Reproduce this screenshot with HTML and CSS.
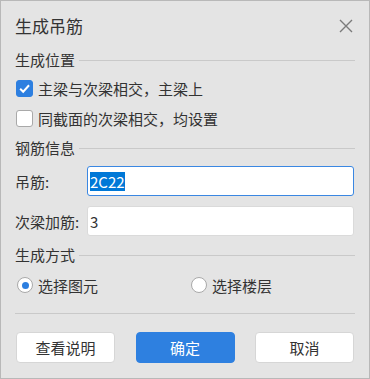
FILE: index.html
```html
<!DOCTYPE html>
<html lang="zh-cn">

<head>
    <meta charset="UTF-8">
    <meta name="viewport" content="width=device-width, initial-scale=1.0">
    <title>生成吊筋</title>
    <link rel="stylesheet" href="styles.css">
</head>

<body>
    <div class="dialog">
        <div class="title-bar">
            <span class="title">生成吊筋</span>
            <svg class="close" width="14" height="14" viewBox="0 0 14 14">
                <path d="M1 1L13 13M13 1L1 13" stroke="#7a7a7a" stroke-width="1.4" fill="none" />
            </svg>
        </div>

        <div class="group-title">生成位置<span class="rule"></span></div>
        <div class="check-row">
            <span class="check checked">
                <svg width="13" height="13" viewBox="0 0 12 12">
                    <path d="M2 6.2L4.8 9L10.2 3" stroke="#fff" stroke-width="1.8" fill="none" />
                </svg>
            </span>
            主梁与次梁相交，主梁上
        </div>
        <div class="check-row">
            <span class="check"></span>
            同截面的次梁相交，均设置
        </div>

        <div class="group-title group-2">钢筋信息<span class="rule"></span></div>
        <div class="field-row">
            <span class="label">吊筋:</span>
            <div class="input focused"><span class="selected">2C22</span></div>
        </div>
        <div class="field-row field-2">
            <span class="label">次梁加筋:</span>
            <div class="input">3</div>
        </div>

        <div class="group-title group-3">生成方式<span class="rule"></span></div>
        <div class="radio-row">
            <div class="option first"><span class="radio on"></span>选择图元</div>
            <div class="option"><span class="radio"></span>选择楼层</div>
        </div>

        <div class="separator"></div>

        <div class="buttons">
            <button class="btn">查看说明</button>
            <button class="btn primary">确定</button>
            <button class="btn">取消</button>
        </div>
    </div>
</body>

</html>
```

FILE: styles.css
```css
html,
body {
    margin: 0;
    padding: 0;
}

body {
    font-family: "Noto Sans CJK SC", "Liberation Sans", sans-serif;
    font-size: 15px;
    color: #333;
}

.dialog {
    width: 370px;
    height: 379px;
    box-sizing: border-box;
    border: 1px solid #b8b8b8;
    background-color: #e4e4e4;
    padding: 0 14px;
}

.title-bar {
    height: 49px;
    display: flex;
    align-items: center;
    justify-content: space-between;
}

.title {
    font-size: 17px;
    line-height: 20px;
}

.close {
    margin-right: 2px;
}

.group-title {
    display: flex;
    align-items: center;
    height: 20px;
    line-height: 20px;
}

.rule {
    flex: 1;
    height: 1px;
    background-color: #c9c9c9;
    margin-left: 4px;
}

.check-row {
    display: flex;
    align-items: center;
    height: 30px;
}

.group-title + .check-row {
    margin-top: 3px;
}

.check {
    width: 17px;
    height: 17px;
    box-sizing: border-box;
    border: 1px solid #a9a9a9;
    border-radius: 3px;
    background-color: #fff;
    margin: 0 5px 0 1px;
    display: flex;
    align-items: center;
    justify-content: center;
}

.check.checked {
    background-color: #2d7fe0;
    border-color: #2d7fe0;
}

.group-2 {
    margin-top: 5px;
}

.field-row {
    display: flex;
    align-items: center;
    margin-top: 8px;
}

.field-2 {
    margin-top: 10px;
}

.label {
    width: 72px;
}

.input {
    flex: 1;
    height: 30px;
    box-sizing: border-box;
    border: 1px solid #dadada;
    border-radius: 3px;
    background-color: #fff;
    padding-left: 2px;
    margin-right: 1px;
    display: flex;
    align-items: center;
    font-size: 15px;
}

.input.focused {
    border-color: #3a87e2;
}

.selected {
    background-color: #0078d7;
    color: #fff;
    line-height: 19px;
}

.group-3 {
    margin-top: 9px;
}

.radio-row {
    display: flex;
    align-items: center;
    height: 30px;
    margin-top: 5px;
}

.option {
    display: flex;
    align-items: center;
}

.option.first {
    width: 174px;
}

.radio {
    width: 16px;
    height: 16px;
    box-sizing: border-box;
    border: 1px solid #a9a9a9;
    border-radius: 50%;
    background-color: #fff;
    margin: 0 5px 0 2px;
    display: flex;
    align-items: center;
    justify-content: center;
}

.radio.on::after {
    content: "";
    width: 7px;
    height: 7px;
    border-radius: 50%;
    background-color: #2d7fe0;
}

.separator {
    height: 1px;
    background-color: #c9c9c9;
    margin-top: 13px;
}

.buttons {
    display: flex;
    justify-content: space-between;
    padding: 0 1px;
    margin-top: 18px;
}

.btn {
    width: 99px;
    height: 31px;
    border: 1px solid #d6d6d6;
    border-radius: 4px;
    background-color: #fff;
    color: #333;
    font-family: inherit;
    font-size: 15px;
    padding: 0;
}

.btn.primary {
    background-color: #2e80e0;
    border-color: #2e80e0;
    color: #fff;
}
```
